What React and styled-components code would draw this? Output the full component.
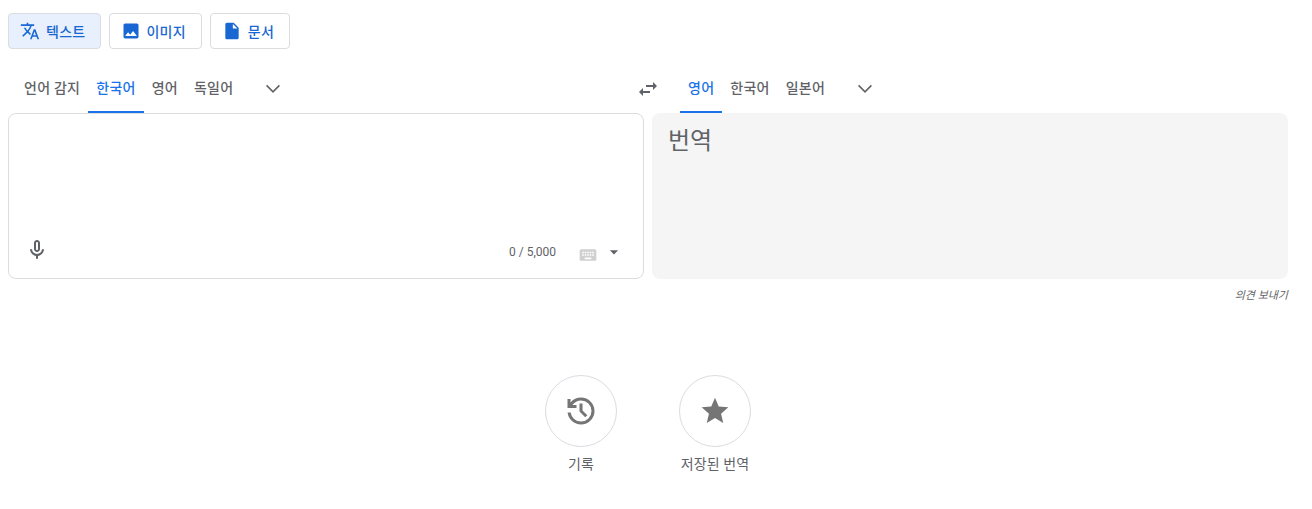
import React from "react";
import styled, { createGlobalStyle } from "styled-components";

const Global = createGlobalStyle`
  html, body { margin: 0; padding: 0; background: #fff; }
  body { font-family: Roboto, "Noto Sans CJK KR", sans-serif; color: #5f6368; }
`;

const Page = styled.div`
  width: 1312px;
  height: 509px;
  padding: 13px 24px 0 8px;
  box-sizing: border-box;
  overflow: hidden;
`;
const ModeBar = styled.div`
  display: flex;
  gap: 8px;
`;
const ModeButton = styled.button`
  display: flex;
  align-items: center;
  gap: ${(p) => p.$gap}px;
  height: 36px;
  padding: 0 15px 0 11px;
  box-sizing: border-box;
  border: 1px solid #dadce0;
  border-radius: 4px;
  background: ${(p) => (p.$active ? "#e8f0fe" : "#fff")};
  color: #1967d2;
  font: 500 14px Roboto, "Noto Sans CJK KR", sans-serif;
  letter-spacing: 0.25px;
`;
const Icon = styled.svg`
  display: block;
  flex: none;
  width: ${(p) => p.$size}px;
  height: ${(p) => p.$size}px;
  fill: ${(p) => p.$color || "#5f6368"};
`;
const Chevron = styled.svg`
  display: block;
  width: 24px;
  height: 24px;
  fill: none;
  stroke: #5f6368;
  stroke-width: 1.6;
`;
const Columns = styled.div`
  display: grid;
  grid-template-columns: 636px 636px;
  gap: 0 8px;
  margin-top: 15px;
`;
const LangBar = styled.div`
  display: flex;
  align-items: stretch;
  height: 49px;
  padding-left: ${(p) => p.$pad}px;
  position: relative;
`;
const Tab = styled.div`
  display: flex;
  align-items: center;
  box-sizing: border-box;
  height: 49px;
  padding: 0 8px 2px;
  color: ${(p) => (p.$active ? "#1a73e8" : "#5f6368")};
  border-bottom: 2px solid ${(p) => (p.$active ? "#1a73e8" : "transparent")};
  font-size: 14px;
  font-weight: 500;
  letter-spacing: 0.25px;
  white-space: nowrap;
`;
const More = styled.div`
  display: flex;
  align-items: center;
  margin-left: ${(p) => p.$gap}px;
  padding-bottom: 1px;
`;
const Swap = styled.div`
  position: absolute;
  left: -16px;
  top: 13px;
`;
const SourcePanel = styled.div`
  display: flex;
  flex-direction: column;
  justify-content: flex-end;
  height: 166px;
  box-sizing: border-box;
  border: 1px solid #dadce0;
  border-radius: 8px;
  background: #fff;
`;
const SourceFooter = styled.div`
  display: flex;
  align-items: center;
  height: 50px;
  padding: 0 19px 3px 16px;
`;
const Counter = styled.span`
  margin-left: auto;
  padding-top: 3px;
  font-size: 12px;
  color: #5f6368;
`;
const Keyboard = styled.div`
  display: flex;
  align-items: flex-start;
  gap: 6px;
  margin-left: 22px;
  padding-top: 7px;
`;
const KeyCap = styled.div`
  margin-top: 3px;
`;
const TargetPanel = styled.div`
  height: 166px;
  box-sizing: border-box;
  padding: 12px 16px;
  border-radius: 8px;
  background: #f5f5f5;
  color: #5f6368;
  font-size: 24px;
  line-height: 32px;
`;
const FeedbackRow = styled.div`
  grid-column: 2;
  display: flex;
  justify-content: flex-end;
  margin-top: 9px;
  font-size: 11px;
  line-height: 15px;
  font-style: italic;
  color: #5f6368;
`;
const Shortcuts = styled.div`
  display: flex;
  justify-content: center;
  gap: 62px;
  margin-top: 72px;
`;
const Shortcut = styled.div`
  display: flex;
  flex-direction: column;
  align-items: center;
  width: 72px;
`;
const Circle = styled.div`
  display: flex;
  align-items: center;
  justify-content: center;
  width: 72px;
  height: 72px;
  box-sizing: border-box;
  border: 1px solid #dadce0;
  border-radius: 50%;
`;
const ShortcutLabel = styled.div`
  margin-top: 7px;
  font-size: 14px;
  line-height: 20px;
  letter-spacing: 0.1px;
  font-weight: 400;
  color: #5f6368;
  white-space: nowrap;
`;

const P = {
  translate: "M12.87 15.07l-2.54-2.51.03-.03c1.74-1.94 2.98-4.17 3.71-6.53H17V4h-7V2H8v2H1v1.99h11.17C11.5 7.92 10.44 9.75 9 11.35 8.07 10.32 7.3 9.19 6.69 8h-2c.73 1.63 1.73 3.17 2.98 4.56l-5.09 5.02L4 19l5-5 3.11 3.11.76-2.04zM18.5 10h-2L12 22h2l1.12-3h4.75L21 22h2l-4.5-12zm-2.62 7l1.62-4.33L19.12 17h-3.24z",
  image: "M21 19V5c0-1.1-.9-2-2-2H5c-1.1 0-2 .9-2 2v14c0 1.1.9 2 2 2h14c1.1 0 2-.9 2-2zM8.5 13.5l2.5 3.01L14.5 12l4.5 6H5l3.5-4.5z",
  file: "M6 2c-1.1 0-1.99.9-1.99 2L4 20c0 1.1.89 2 1.99 2H18c1.1 0 2-.9 2-2V8l-6-6H6zm7 7V3.5L18.5 9H13z",
  mic: "M12 14c1.66 0 3-1.34 3-3V5c0-1.66-1.34-3-3-3S9 3.34 9 5v6c0 1.66 1.34 3 3 3zm-1-9c0-.55.45-1 1-1s1 .45 1 1v6c0 .55-.45 1-1 1s-1-.45-1-1V5zm6.91 6c-.49 0-.9.36-.98.85C16.52 14.2 14.47 16 12 16s-4.52-1.8-4.93-4.15c-.08-.49-.49-.85-.98-.85-.61 0-1.09.54-1 1.14.49 3 2.89 5.35 5.91 5.78V20c0 .55.45 1 1 1s1-.45 1-1v-2.08c3.02-.43 5.42-2.78 5.91-5.78.1-.6-.39-1.14-1-1.14z",
  swap: "M6.99 11L3 15l3.99 4v-3H14v-2H6.99v-3zM21 9l-3.99-4v3H10v2h7.01v3L21 9z",
  history: "M480-120q-138 0-240.5-91.5T122-440h82q14 104 92.5 172T480-200q117 0 198.5-81.5T760-480q0-117-81.5-198.5T480-760q-69 0-129 32t-101 88h110v80H120v-240h80v94q51-64 124.5-99T480-840q75 0 140.5 28.5t114 77q48.5 48.5 77 114T840-480q0 75-28.5 140.5t-77 114q-48.5 48.5-114 77T480-120Zm112-192L440-464v-216h80v184l128 128-56 56Z",
  star: "M12 17.27L18.18 21l-1.64-7.03L22 9.24l-7.19-.61L12 2 9.19 8.63 2 9.24l5.46 4.73L5.82 21z",
  keyboard: "M20 5H4c-1.1 0-1.99.9-1.99 2L2 17c0 1.1.9 2 2 2h16c1.1 0 2-.9 2-2V7c0-1.1-.9-2-2-2zm-9 3h2v2h-2V8zm0 3h2v2h-2v-2zM8 8h2v2H8V8zm0 3h2v2H8v-2zm-1 2H5v-2h2v2zm0-3H5V8h2v2zm9 7H8v-2h8v2zm0-4h-2v-2h2v2zm0-3h-2V8h2v2zm3 3h-2v-2h2v2zm0-3h-2V8h2v2z",
  drop: "M7 10l5 5 5-5z",
};

const Glyph = ({ d, size = 24, color, box = "0 0 24 24" }) => (
  <Icon viewBox={box} $size={size} $color={color}><path d={d} /></Icon>
);
const Expand = () => (
  <Chevron viewBox="0 0 24 24"><path d="M5.6 9.4 12 15.8l6.4-6.4" /></Chevron>
);

export default function App() {
  return (
    <Page>
      <Global />
      <ModeBar>
        <ModeButton $active $gap={6}><Glyph d={P.translate} size={20} color="#1967d2" />텍스트</ModeButton>
        <ModeButton $gap={5}><Glyph d={P.image} size={20} color="#1967d2" />이미지</ModeButton>
        <ModeButton $gap={6}><Glyph d={P.file} size={20} color="#1967d2" />문서</ModeButton>
      </ModeBar>
      <Columns>
        <LangBar $pad={8}>
          <Tab>언어 감지</Tab>
          <Tab $active>한국어</Tab>
          <Tab>영어</Tab>
          <Tab>독일어</Tab>
          <More $gap={20}><Expand /></More>
        </LangBar>
        <LangBar $pad={28}>
          <Swap><Glyph d={P.swap} /></Swap>
          <Tab $active>영어</Tab>
          <Tab>한국어</Tab>
          <Tab>일본어</Tab>
          <More $gap={20}><Expand /></More>
        </LangBar>
        <SourcePanel>
          <SourceFooter>
            <Glyph d={P.mic} />
            <Counter>0 / 5,000</Counter>
            <Keyboard>
              <KeyCap><Glyph d={P.keyboard} size={20} color="#cfcfcf" /></KeyCap>
              <Glyph d={P.drop} size={20} color="#5f6368" />
            </Keyboard>
          </SourceFooter>
        </SourcePanel>
        <TargetPanel>번역</TargetPanel>
        <FeedbackRow>의견 보내기</FeedbackRow>
      </Columns>
      <Shortcuts>
        <Shortcut>
          <Circle><Glyph d={P.history} size={36} color="#757575" box="0 -960 960 960" /></Circle>
          <ShortcutLabel>기록</ShortcutLabel>
        </Shortcut>
        <Shortcut>
          <Circle><Glyph d={P.star} size={32} color="#757575" /></Circle>
          <ShortcutLabel>저장된 번역</ShortcutLabel>
        </Shortcut>
      </Shortcuts>
    </Page>
  );
}
